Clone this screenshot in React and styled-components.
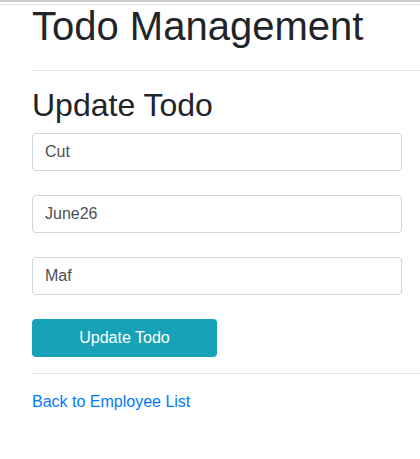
import React, { useState } from "react";
import styled, { createGlobalStyle } from "styled-components";

const GlobalStyle = createGlobalStyle`
  * { box-sizing: border-box; }
  body {
    margin: 0;
    background: #fff;
    font-family: "Liberation Sans", Arial, sans-serif;
    color: #212529;
    overflow: hidden;
  }
`;

const TopRule = styled.div`
  height: 5px;
  border-top: 2px solid #cdcdcd;
  border-bottom: 1px solid #e2e2e2;
`;

const Container = styled.div`
  padding-left: 32px;
`;

const Title = styled.h1`
  margin: 0 0 23px;
  font-size: 40px;
  line-height: 42px;
  font-weight: 400;
  color: #212529;
`;

const Hr = styled.hr`
  margin: 0;
  border: 0;
  border-top: 1px solid #e5e5e5;
`;

const SubTitle = styled.h2`
  margin: 15px 0 9px;
  font-size: 32px;
  line-height: 38px;
  font-weight: 400;
  color: #212529;
`;

const Form = styled.form`
  width: 370px;
  display: flex;
  flex-direction: column;
  gap: 24px;
  padding-bottom: 16px;
`;

const Input = styled.input`
  display: block;
  width: 100%;
  height: 38px;
  padding: 6px 12px;
  font-family: inherit;
  font-size: 16px;
  color: #495057;
  background: #fff;
  border: 1px solid #ced4da;
  border-radius: 4px;
  outline: none;
`;

const Button = styled.button`
  width: 185px;
  height: 38px;
  border: 0;
  border-radius: 4px;
  background: #17a2b8;
  color: #fff;
  font-family: inherit;
  font-size: 16px;
  cursor: pointer;
`;

const BackLink = styled.a`
  display: inline-block;
  margin-top: 16px;
  font-size: 16px;
  line-height: 24px;
  color: #007bff;
  text-decoration: none;
`;

const App = () => {
  const [todo, setTodo] = useState({ description: "Cut", date: "June26", user: "Maf" });

  const change = (key) => (e) => setTodo({ ...todo, [key]: e.target.value });

  return (
    <>
      <GlobalStyle />
      <TopRule />
      <Container>
        <Title>Todo Management</Title>
        <Hr />
        <SubTitle>Update Todo</SubTitle>
        <Form onSubmit={(e) => e.preventDefault()}>
          <Input value={todo.description} onChange={change("description")} />
          <Input value={todo.date} onChange={change("date")} />
          <Input value={todo.user} onChange={change("user")} />
          <div>
            <Button type="submit">Update Todo</Button>
          </div>
        </Form>
        <Hr />
        <BackLink href="#">Back to Employee List</BackLink>
      </Container>
    </>
  );
};

export default App;
